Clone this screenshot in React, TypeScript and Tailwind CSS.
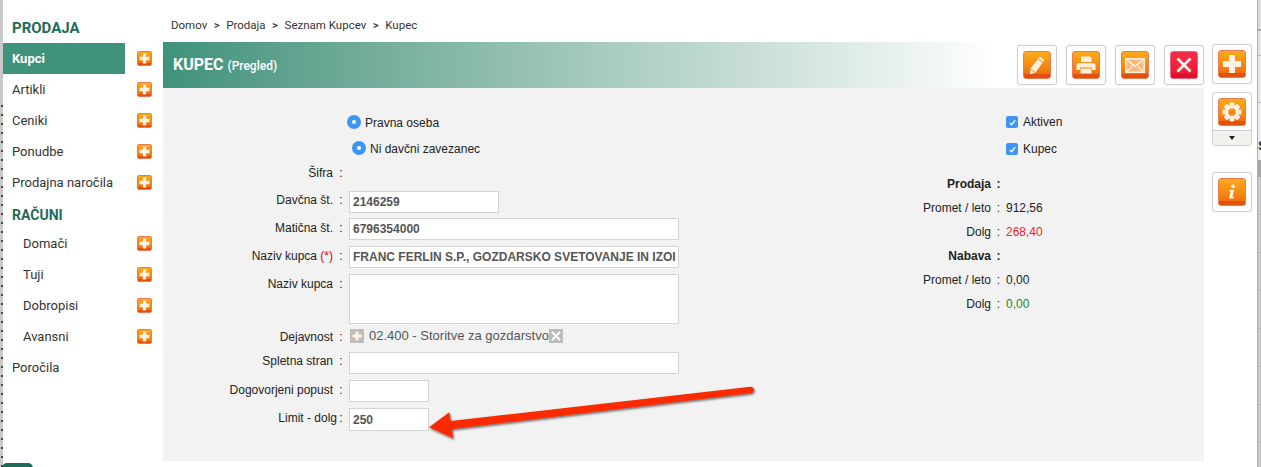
import React from "react";

const Orange = ({ size = 28, red = false, children }: { size?: number; red?: boolean; children?: React.ReactNode }) => (
  <div
    className={
      (size < 20 ? "rounded-[2px] " : "rounded-[3px] ") +
      (red
        ? "relative flex items-center justify-center border border-[#f0607a] bg-gradient-to-b from-[#f4304a] to-[#e8142c] overflow-hidden"
        : "relative flex items-center justify-center border border-[#ea7a55] bg-gradient-to-b from-[#fbab1d] via-[#f68a12] to-[#ee6310] overflow-hidden")
    }
    style={{ width: size, height: size }}
  >
    <div className={red ? "absolute left-0 right-0 bottom-0 h-[16%] bg-[#d8122a]" : "absolute left-0 right-0 bottom-0 h-[16%] bg-[#e0520c]"} />
    <div className="relative flex items-center justify-center">{children}</div>
  </div>
);

const Plus = ({ s = 20 }: { s?: number }) => (
  <svg width={s} height={s} viewBox="0 0 20 20"><path d="M7 1h6v6h6v6h-6v6H7v-6H1V7h6z" fill="#fff2e4" /></svg>
);

const ActionBtn = ({ children }: { children: React.ReactNode }) => (
  <div className="w-10 h-10 shrink-0 flex items-center justify-center bg-white border border-[#cfcfcf] rounded-[3px] shadow-[0_0_2px_rgba(0,0,0,0.1)]">
    {children}
  </div>
);

const Pencil = () => (
  <svg width="16" height="19" viewBox="0 0 16 19">
    <path d="M11 0.5l4.5 3.5-9 12.5-5.5 2 0.4-6z" fill="#fff0dc" />
    <path d="M9.3 3l4.6 3.4" stroke="#f08a14" strokeWidth="1" />
    <path d="M1.6 13l4.2 3.2" stroke="#f08a14" strokeWidth="1" />
  </svg>
);
const Printer = () => (
  <svg width="20" height="18" viewBox="0 0 20 18">
    <path d="M5 0.5h9l1.5 1.5v4H5z" fill="#fff0dc" />
    <path d="M2 7h16a1.5 1.5 0 011.5 1.5V14H16v-2.5H4V14H0.5V8.5A1.5 1.5 0 012 7z" fill="#fff0dc" />
    <path d="M4.5 12.5h11V17.5h-11z" fill="#fff0dc" />
  </svg>
);
const Mail = () => (
  <svg width="20" height="15" viewBox="0 0 20 15">
    <rect x="0.75" y="0.75" width="18.5" height="13.5" fill="#fbb878" stroke="#fff0dc" strokeWidth="1.5" />
    <path d="M1 1l9 7.5L19 1M2 13.5l5-5M18 13.5l-5-5" fill="none" stroke="#fff4e8" strokeWidth="1.4" />
  </svg>
);
const Cross = () => (
  <svg width="16" height="16" viewBox="0 0 16 16"><path d="M1.5 1.5l13 13M14.5 1.5l-13 13" stroke="#fff0e8" strokeWidth="2.8" /></svg>
);
const Gear = () => (
  <svg width="20" height="20" viewBox="0 0 20 20">
    <g fill="#fff2e0">
      {[0, 45, 90, 135, 180, 225, 270, 315].map((a) => (
        <rect key={a} x="7.6" y="0.5" width="4.8" height="5" rx="1" transform={`rotate(${a} 10 10)`} />
      ))}
    </g>
    <circle cx="10" cy="10" r="5.4" fill="none" stroke="#fff2e0" strokeWidth="3.4" />
  </svg>
);
const Info = () => (
  <svg width="10" height="20" viewBox="0 0 14 22">
    <circle cx="8.6" cy="3" r="2.6" fill="#fff2e0" />
    <path d="M4 8h6l-2.4 9.5H10L9.4 20H2.6l2.4-9.6H3.4z" fill="#fff2e0" />
  </svg>
);

const NavItem = ({ label, active, indent, plus = true }: { label: string; active?: boolean; indent?: boolean; plus?: boolean }) => (
  <div className="flex items-center h-[31px]">
    <div
      className={
        "w-[122px] h-[31px] flex items-center whitespace-nowrap text-[13px] " +
        (active ? "bg-[#3f927c] text-white font-bold pl-[9px] " : indent ? "text-[#333] pl-5 " : "text-[#333] pl-[9px] ")
      }
    >
      {label}
    </div>
    {plus && (
      <div className="ml-[12px]">
        <Orange size={15}><Plus s={11} /></Orange>
      </div>
    )}
  </div>
);

const Field = ({ label, h, children, labelClass = "", textClass = "" }: { label: React.ReactNode; h: number; children?: React.ReactNode; labelClass?: string; textClass?: string }) => (
  <div className="flex items-start" style={{ height: h }}>
    <div className={"w-[186px] shrink-0 flex justify-end text-[12px] text-[#222] whitespace-nowrap " + labelClass}>
      <span className={textClass}>{label}</span>
      <span className="w-4 text-center">:</span>
    </div>
    <div>{children}</div>
  </div>
);

const Input = ({ w, h = 22, value = "" }: { w: number; h?: number; value?: string }) => (
  <div
    className="bg-white border border-[#d4d4d4] px-[3px] text-[12px] font-bold text-[#555] whitespace-nowrap overflow-hidden flex items-center"
    style={{ width: w, height: h }}
  >
    {value}
  </div>
);

const Radio = () => (
  <span className="mt-[1px] w-[14px] h-[14px] rounded-full bg-[#3d96f5] flex items-center justify-center shrink-0">
    <span className="w-1 h-1 rounded-full bg-white" />
  </span>
);
const Check = () => (
  <span className="w-3 h-3 rounded-[2px] bg-[#3d96f5] flex items-center justify-center shrink-0">
    <svg width="9" height="9" viewBox="0 0 10 10"><path d="M2 5.5l2 2 4-5" stroke="#fff" strokeWidth="1.4" fill="none" /></svg>
  </span>
);

const Stat = ({ label, value, bold, color }: { label: string; value?: string; bold?: boolean; color?: string }) => (
  <div className="flex h-6 items-center text-[12px] text-[#222] whitespace-nowrap">
    <span className={"w-[91px] text-right " + (bold ? "font-bold" : "")}>{label}</span>
    <span className={"w-[15px] text-center " + (bold ? "font-bold" : "")}>:</span>
    <span style={color ? { color } : undefined}>{value}</span>
  </div>
);

const Crumb = () => <span className="font-medium">&gt;</span>;

export default function App() {
  return (
    <div className="relative flex w-[1261px] h-[467px] overflow-hidden bg-white font-['Liberation_Sans',Arial,sans-serif]">
      {/* left sliver of the window behind */}
      <div className="w-[3px] shrink-0 bg-[#c9c9c9] bg-[repeating-linear-gradient(to_bottom,#444_0,#444_2px,transparent_2px,transparent_9px)] bg-no-repeat bg-[length:2px_100%] bg-[position:1px_105px]" />

      {/* sidebar */}
      <aside className="w-[160px] shrink-0 font-['Roboto',sans-serif]">
        <div className="h-[43px] pt-[19px] pl-[9px] text-[15px] leading-[18px] font-bold text-[#1f6b5a]">PRODAJA</div>
        <NavItem label="Kupci" active />
        <NavItem label="Artikli" />
        <NavItem label="Ceniki" />
        <NavItem label="Ponudbe" />
        <NavItem label="Prodajna naročila" />
        <div className="h-[30px] pt-1 pl-[9px] flex items-center text-[14px] font-bold text-[#1f6b5a]">RAČUNI</div>
        <NavItem label="Domači" indent />
        <NavItem label="Tuji" indent />
        <NavItem label="Dobropisi" indent />
        <NavItem label="Avansni" indent />
        <NavItem label="Poročila" plus={false} />
      </aside>

      {/* main */}
      <main className="w-[1041px] shrink-0">
        <div className="h-[42px] pl-2 pt-[18px] flex gap-[6.5px] text-[11.5px] leading-[14px] text-[#333] font-['Roboto',sans-serif] whitespace-nowrap">
          <span>Domov</span><Crumb /><span>Prodaja</span><Crumb /><span>Seznam Kupcev</span><Crumb /><span>Kupec</span>
        </div>
        <div className="h-[46px] flex items-center bg-gradient-to-r from-[#3f927c] to-white to-80%">
          <div className="pl-[10px] text-white font-bold text-[16px] font-['Roboto',sans-serif] whitespace-nowrap">
            KUPEC <span className="text-[12px] font-medium">(Pregled)</span>
          </div>
          <div className="ml-auto flex gap-[9px]">
            <ActionBtn><Orange><Pencil /></Orange></ActionBtn>
            <ActionBtn><Orange><Printer /></Orange></ActionBtn>
            <ActionBtn><Orange><Mail /></Orange></ActionBtn>
            <ActionBtn><Orange red><Cross /></Orange></ActionBtn>
          </div>
        </div>
        <div className="h-[373px] bg-[#f2f2f2] flex">
          {/* form */}
          <div className="w-[700px] pt-[26px]">
            <div className="h-[26px] pl-[184px] flex items-start gap-1 text-[12px] text-[#222]"><Radio /><span>Pravna oseba</span></div>
            <div className="h-[23px] pl-[189px] flex items-start gap-1 text-[12px] text-[#222]"><Radio /><span>Ni davčni zavezanec</span></div>
            <Field label="Šifra" h={28} labelClass="pt-[1px]" />
            <Field label="Davčna št." h={27}><Input w={150} value="2146259" /></Field>
            <Field label="Matična št." h={28} labelClass="pt-[1px]"><Input w={330} value="6796354000" /></Field>
            <Field label={<>Naziv kupca <span className="text-[#d0021b]">(*)</span></>} h={28} labelClass="pt-[1px]"><Input w={330} value="FRANC FERLIN S.P., GOZDARSKO SVETOVANJE IN IZOI" /></Field>
            <Field label="Naziv kupca" h={55} labelClass="pt-[1px]"><Input w={330} h={50} /></Field>
            <Field label="Dejavnost" h={23} labelClass="-mt-[1px]">
              <div className="flex items-center h-[14px] text-[#555] text-[13px] whitespace-nowrap">
                <span className="ml-[1px] w-[14px] h-[14px] bg-[#bdbdbd] flex items-center justify-center mr-[5px]"><Plus s={10} /></span>
                <span>02.400 - Storitve za gozdarstvo</span>
                <span className="w-[14px] h-[14px] bg-[#bdbdbd] flex items-center justify-center">
                  <svg width="10" height="10" viewBox="0 0 10 10"><path d="M1 1l8 8M9 1L1 9" stroke="#fff" strokeWidth="1.8" /></svg>
                </span>
              </div>
            </Field>
            <Field label="Spletna stran" h={28}><Input w={330} /></Field>
            <Field label="Dogovorjeni popust" h={28} labelClass="pt-[1px]"><Input w={80} /></Field>
            <Field label="Limit - dolg" h={24} labelClass="pt-[1px]" textClass="-mr-1"><Input w={80} h={23} value="250" /></Field>
          </div>
          {/* right column */}
          <div className="w-[341px] relative">
            <div className="absolute left-[143px] top-[25px] flex items-center gap-[5px] text-[12px] text-[#222]"><Check /><span>Aktiven</span></div>
            <div className="absolute left-[143px] top-[52px] flex items-center gap-[5px] text-[12px] text-[#222]"><Check /><span>Kupec</span></div>
            <div className="absolute left-[37px] top-[84px]">
              <Stat label="Prodaja" bold />
              <Stat label="Promet / leto" value="912,56" />
              <Stat label="Dolg" value="268,40" color="#fb1a1a" />
              <Stat label="Nabava" bold />
              <Stat label="Promet / leto" value="0,00" />
              <Stat label="Dolg" value="0,00" color="#1a8a1a" />
            </div>
          </div>
        </div>
      </main>

      {/* right tool column */}
      <div className="w-[53px] shrink-0 pl-2 pt-[44px] flex flex-col">
        <ActionBtn><Orange><Plus /></Orange></ActionBtn>
        <div className="mt-2 w-10 h-[54px] bg-white border border-[#cfcfcf] rounded-[3px] flex flex-col items-center pt-[5px] overflow-hidden">
          <Orange><Gear /></Orange>
          <div className="mt-[4px] w-full flex-1 bg-[#f1f1ee] border-t border-[#cfcfcf] flex items-center justify-center">
            <svg width="6" height="4" viewBox="0 0 6 4"><path d="M0 0h6L3 4z" fill="#222" /></svg>
          </div>
        </div>
        <div className="mt-[26px]"><ActionBtn><Orange><Info /></Orange></ActionBtn></div>
      </div>

      {/* sliver of the window behind, right */}
      <div className="w-[4px] shrink-0 flex flex-col overflow-hidden bg-[#c9c9c9] border-l border-[#b0b0b0]">
        <div className="h-[29px] bg-[#dcdcdc]" />
        <div className="h-[26px] bg-[#e4e4e4] border-t-2 border-[#aaa]" />
        <div className="h-[47px] bg-[#e8e8e8] border-t border-[#bbb]" />
        <div className="h-[58px] bg-[#ececec] border-t border-[#bbb] pt-[36px] text-[13px] leading-[14px] font-bold text-[#333]">S</div>
        <div className="h-[17px] bg-[#a8a8a8]" />
        <div className="flex-1 bg-[#c9c9c9] bg-[repeating-linear-gradient(to_bottom,transparent_0,transparent_37px,#b5b5b5_37px,#b5b5b5_38px)]" />
      </div>

      {/* overlays */}
      <div className="absolute left-[2px] top-[463px] w-[31px] h-[6px] rounded-t-[5px] bg-[#1f6b5a]" />
      <svg className="absolute left-0 top-0 pointer-events-none" width="1261" height="467" viewBox="0 0 1261 467">
        <defs>
          <filter id="sh" x="-10%" y="-50%" width="120%" height="200%">
            <feDropShadow dx="1" dy="1.5" stdDeviation="1.2" floodColor="#000" floodOpacity="0.6" />
          </filter>
        </defs>
        <path
          d="M429 427.3L449.3 412.3L450.7 421L750.5 386.7Q753.5 386.6 753.8 389.6Q753.8 392.4 751 393L451.7 429L453.3 438.3Z"
          fill="#fb2a00"
          filter="url(#sh)"
        />
      </svg>
    </div>
  );
}
